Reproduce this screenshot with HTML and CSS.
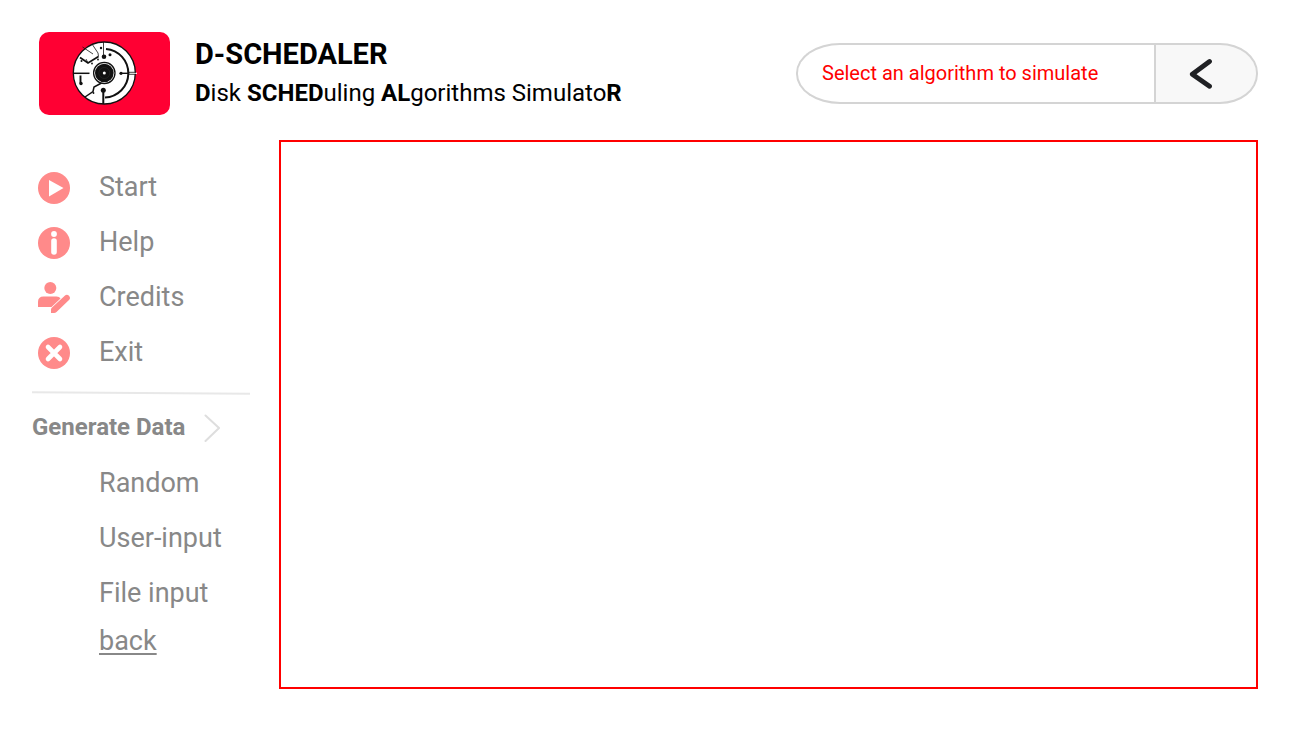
FILE: index.html
```html
<!DOCTYPE html>
<html lang="en">
<head>
<meta charset="utf-8">
<meta name="viewport" content="width=device-width, initial-scale=1">
<title>D-SCHEDALER</title>
<link rel="stylesheet" href="styles.css">
</head>
<body>
<div class="page">
  <header class="header">
    <div class="logo">
      <svg class="logo-disk" viewBox="0 0 72 72" fill="none" stroke="#111" aria-hidden="true">
        <circle cx="36.3" cy="37" r="31" fill="#fff" stroke-width="1.3"/>
        <path d="M5.500 37.300H21.500" stroke-width="1.500"/>
        <path d="M52.500 37.300H62" stroke-width="1.400"/>
        <path d="M61 37.300H69" stroke="#fff" stroke-width="1.200"/>
        <path d="M61 36.300H68M61 38.300H68" stroke-width=".8"/>
        <path d="M38 13A24.300 24.300 0 0 1 37 61.500" stroke-width="2"/>
        <path d="M35.300 55V68" stroke-width="2"/>
        <path d="M35.500 6V20" stroke-width=".8"/>
        <path d="M12 21.500L20 27L30.500 20.500" stroke-width="1.700"/>
        <path d="M30.500 20.500L30 17L24 8M25 18L14.500 11M20 27L18 23" stroke-width=".8"/>
        <path d="M12.500 39.500V47" stroke-width="1.900"/>
        <path d="M17 61L25 55.500L26 51L34.500 46.500" stroke-width="1.500"/>
        <circle cx="36.300" cy="37" r="10.700" fill="#fff" stroke-width="1.300"/>
        <circle cx="36.300" cy="37" r="9.300" fill="#111" stroke="none"/>
        <circle cx="36.300" cy="37" r="5.500" stroke="#2c2c2c" stroke-width=".6"/>
        <circle cx="36.300" cy="37" r="1.500" fill="#fff" stroke="none"/>
        <g fill="#111" stroke="none">
          <circle cx="36" cy="20.700" r="2.300"/>
          <circle cx="42" cy="18.700" r="1.500"/>
          <circle cx="33" cy="12" r="1.200"/>
          <circle cx="35.300" cy="54.200" r="2.500"/>
          <circle cx="53" cy="37.300" r="1.600"/>
          <circle cx="13" cy="47.500" r="1.700"/>
          <circle cx="13.500" cy="25" r="1"/>
          <circle cx="24" cy="27.500" r=".9"/>
          <circle cx="30" cy="23.500" r=".9"/>
          <circle cx="25.500" cy="57" r=".9"/>
        </g>
      </svg>
    </div>
    <div class="brand">
      <h1 class="brand-title">D-SCHEDALER</h1>
      <p class="brand-text"><b>D</b>isk <b>SCHED</b>uling <b>AL</b>gorithms Simulato<b>R</b></p>
    </div>
    <div class="picker">
      <input class="picker-input" type="text" placeholder="Select an algorithm to simulate" aria-label="Select an algorithm to simulate">
      <button class="picker-button" type="button" aria-label="Show algorithms">
        <svg class="picker-arrow" viewBox="0 0 24 32" fill="none" stroke="#202124" stroke-width="4.800" stroke-linecap="round" stroke-linejoin="round"><path d="M20.500 3.500L3.300 16.200L20.500 28.300"/></svg>
      </button>
    </div>
  </header>
  <div class="body">
    <aside class="sidebar">
      <nav class="menu">
        <button class="menu-item" type="button">
          <svg class="menu-icon" viewBox="0 0 32 32"><circle cx="16" cy="16" r="16" fill="#ff8a8a"/><path d="M11 8L25.5 16L11 24.5Z" fill="#fff"/></svg>
          <span class="menu-label">Start</span>
        </button>
        <button class="menu-item" type="button">
          <svg class="menu-icon" viewBox="0 0 32 32"><circle cx="16" cy="16" r="16" fill="#ff8a8a"/><circle cx="16" cy="7" r="2.9" fill="#fff"/><path d="M16 14V25" stroke="#fff" stroke-width="5.6" stroke-linecap="round"/></svg>
          <span class="menu-label">Help</span>
        </button>
        <button class="menu-item" type="button">
          <svg class="menu-icon" viewBox="0 0 32 32" fill="#ff8a8a"><circle cx="12.3" cy="6" r="6"/><path d="M0 25V20Q0 14.500 5.500 14.500H18.500Q21.500 14.500 22.500 16.500L13.500 25Z"/><path d="M13 31V27.500Q13 26.500 14 25.500L27 13.500Q29 12.100 31 13.700Q33 16 31 18L18.500 30Q17.500 31 16 31Z"/></svg>
          <span class="menu-label">Credits</span>
        </button>
        <button class="menu-item" type="button">
          <svg class="menu-icon" viewBox="0 0 32 32"><circle cx="16" cy="16" r="16" fill="#ff8a8a"/><path d="M10 10L22 22M22 10L10 22" stroke="#fff" stroke-width="4.600" stroke-linecap="round"/></svg>
          <span class="menu-label">Exit</span>
        </button>
      </nav>
      <svg class="divider" viewBox="0 0 218 4" preserveAspectRatio="none" aria-hidden="true"><path d="M0 1.200L218 2.800" stroke="#e8e8e8" stroke-width="2"/></svg>
      <h2 class="section-title">
        Generate Data
        <svg class="section-arrow" viewBox="0 0 16 30" fill="none" stroke="#dedede" stroke-width="2" stroke-linecap="round"><path d="M1.500 3.500L15 16L1.500 29"/></svg>
      </h2>
      <div class="options">
        <button class="option" type="button">Random</button>
        <button class="option" type="button">User-input</button>
        <button class="option" type="button">File input</button>
        <a class="back" href="#">back</a>
      </div>
    </aside>
    <main class="stage"></main>
  </div>
</div>
</body>
</html>
```
FILE: styles.css
```css
* {
  box-sizing: border-box;
}

body {
  margin: 0;
  background: #fff;
  color: #000;
  font-family: Roboto, "Liberation Sans", sans-serif;
}

button,
input {
  font-family: inherit;
}

.page {
  display: flex;
  flex-direction: column;
  min-height: 100vh;
  padding: 32px 42px 43px 32px;
}

.header {
  display: flex;
  align-items: flex-start;
}

.logo {
  display: flex;
  justify-content: center;
  width: 131px;
  height: 83px;
  margin-left: 7px;
  padding-right: 1px;
  border-radius: 10px;
  background: #ff0033;
}

.logo-disk {
  width: 72px;
  height: 72px;
  margin-top: 4px;
}

.brand {
  flex: 1;
  margin-left: 25px;
}

.brand-title {
  margin: 4px 0 0;
  font-size: 29px;
  line-height: 36px;
  font-weight: 700;
}

.brand-text {
  margin: 6px 0 0;
  font-size: 24px;
  line-height: 30px;
}

.picker {
  display: flex;
  width: 462px;
  height: 61px;
  margin-top: 11px;
}

.picker-input {
  flex: 1;
  min-width: 0;
  padding: 0 24px 2px;
  border: 2px solid #d4d4d4;
  border-right: 0;
  border-radius: 44px 0 0 44px / 30px 0 0 30px;
  background: #fff;
  color: #ff0000;
  font-size: 20px;
}

.picker-input::placeholder {
  color: #ff0000;
  opacity: 1;
}

.picker-button {
  display: flex;
  align-items: center;
  justify-content: center;
  width: 104px;
  padding: 0 10px 0 0;
  border: 2px solid #d4d4d4;
  border-radius: 0 38px 38px 0 / 0 30px 30px 0;
  background: #f8f8f8;
}

.picker-arrow {
  width: 24px;
  height: 32px;
}

.body {
  display: flex;
  flex: 1;
  margin-top: 25px;
}

.sidebar {
  width: 218px;
  margin-right: 29px;
  padding-top: 20px;
}

.menu,
.options {
  display: flex;
  flex-direction: column;
}

.menu-item {
  display: flex;
  align-items: center;
  gap: 29px;
  height: 55px;
  padding: 0 0 0 6px;
  border: 0;
  background: none;
  color: #888;
  font-size: 27px;
}

.menu-icon {
  width: 32px;
  height: 32px;
}

.menu-label {
  padding-bottom: 2px;
}

.divider {
  display: block;
  width: 100%;
  height: 4px;
  margin-top: 11px;
}

.section-title {
  display: flex;
  align-items: center;
  gap: 19px;
  margin: 16px 0 0;
  color: #888;
  font-size: 24px;
  line-height: 32px;
  font-weight: 700;
}

.section-arrow {
  width: 16px;
  height: 30px;
}

.options {
  align-items: flex-start;
  margin-top: 12px;
  padding-left: 67px;
}

.option {
  height: 55px;
  padding: 0;
  border: 0;
  background: none;
  color: #888;
  font-size: 27px;
}

.back {
  color: #888;
  font-size: 27px;
  line-height: 42px;
  text-decoration-thickness: 2px;
  text-underline-offset: 3px;
}

.stage {
  flex: 1;
  border: 2px solid #ff0000;
}
```
